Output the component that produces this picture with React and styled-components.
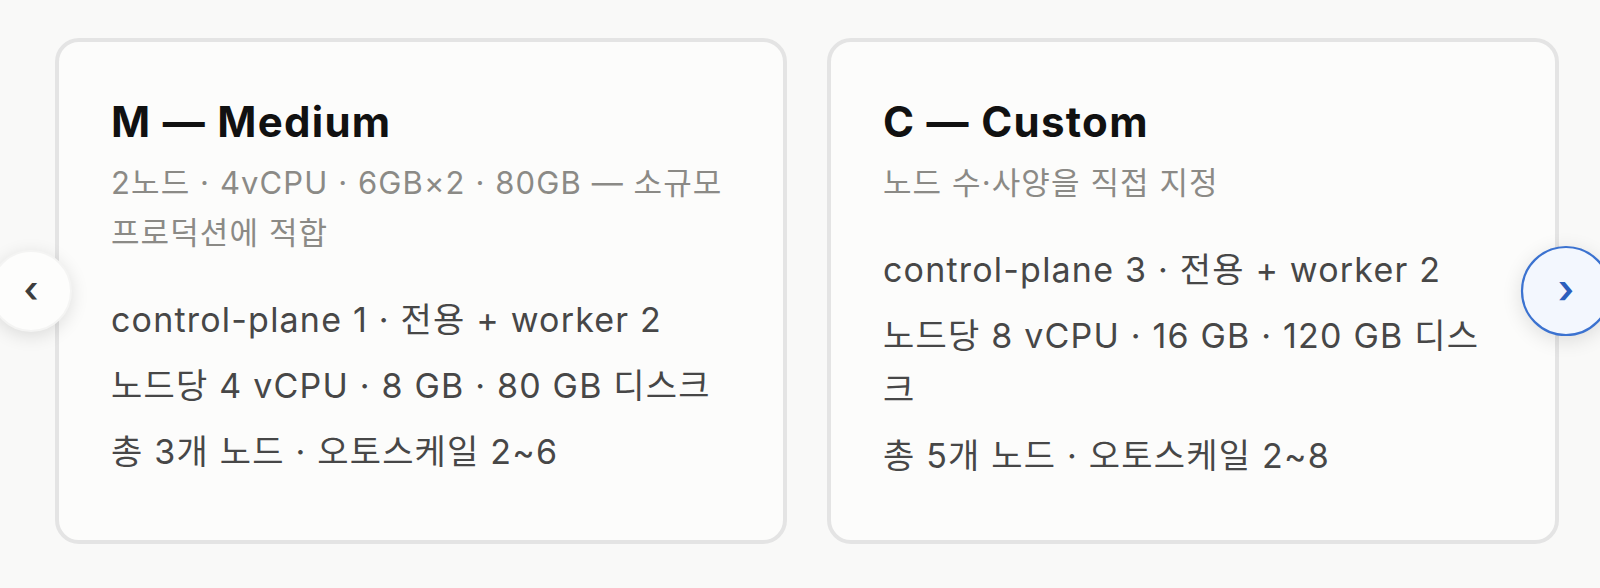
import React from "react";
import styled, { createGlobalStyle } from "styled-components";

const plans = [
  {
    id: "m",
    title: "M — Medium",
    summary: "2노드 · 4vCPU · 6GB×2 · 80GB — 소규모 프로덕션에 적합",
    specs: [
      "control-plane 1 · 전용 + worker 2",
      "노드당 4 vCPU · 8 GB · 80 GB 디스크",
      "총 3개 노드 · 오토스케일 2~6"
    ]
  },
  {
    id: "c",
    title: "C — Custom",
    summary: "노드 수·사양을 직접 지정",
    specs: [
      "control-plane 3 · 전용 + worker 2",
      "노드당 8 vCPU · 16 GB · 120 GB 디스크",
      "총 5개 노드 · 오토스케일 2~8"
    ]
  }
];

const PlanCarousel = () => {
  return (
    <Carousel>
      <Track>
        {plans.map(plan => (
          <Card key={plan.id}>
            <Title>{plan.title}</Title>
            <Summary>{plan.summary}</Summary>
            <SpecList>
              {plan.specs.map(spec => (
                <SpecItem key={spec}>{spec}</SpecItem>
              ))}
            </SpecList>
          </Card>
        ))}
      </Track>
      <NavButton $side="left" aria-label="이전">
        ‹
      </NavButton>
      <NavButton $side="right" $active aria-label="다음">
        ›
      </NavButton>
    </Carousel>
  );
};

export default function App() {
  return (
    <>
      <GlobalStyle />
      <Page>
        <PlanCarousel />
      </Page>
    </>
  );
}

const GlobalStyle = createGlobalStyle`
  html, body {
    margin: 0;
    background: #f9f9f8;
  }
  body {
    font-family: Inter, "Noto Sans CJK KR", sans-serif;
    -webkit-font-smoothing: antialiased;
  }
  * {
    box-sizing: border-box;
  }
`;

const Page = styled.div`
  width: 1600px;
  height: 588px;
  padding-top: 38px;
  overflow: hidden;
`;

const Carousel = styled.div`
  position: relative;
  overflow: hidden;
`;

const Track = styled.div`
  display: flex;
  gap: 40px;
  padding: 0 55px;
`;

const Card = styled.article`
  flex: 0 0 732px;
  border: 4px solid #e4e4e4;
  border-radius: 24px;
  padding: 56px 52px 57px;
  background: #fcfcfb;
`;

const Title = styled.h3`
  margin: 0;
  font-size: 42px;
  line-height: 48px;
  font-weight: 700;
  color: #111;
  letter-spacing: 1.3px;
`;

const Summary = styled.p`
  margin: 12px 0 0;
  font-size: 31px;
  line-height: 50px;
  letter-spacing: 1.1px;
  color: #8b8a86;
`;

const SpecList = styled.ul`
  list-style: none;
  margin: 35px 0 0;
  padding: 0;
  display: flex;
  flex-direction: column;
  gap: 12px;
`;

const SpecItem = styled.li`
  font-size: 34px;
  line-height: 54px;
  letter-spacing: 1.2px;
  color: #474747;
`;

const NavButton = styled.button`
  position: absolute;
  top: 50%;
  ${p => (p.$side === "left" ? "left: -10px;" : "right: -7px;")}
  width: 82px;
  height: 82px;
  border-radius: 50%;
  display: flex;
  align-items: center;
  justify-content: center;
  padding: 0 0 4px;
  font-family: Inter, sans-serif;
  font-size: 36px;
  font-weight: 600;
  line-height: 1;
  cursor: pointer;
  border: 2px solid ${p => (p.$active ? "#3b72d0" : "#f4f4f3")};
  background: ${p => (p.$active ? "#f3f7fe" : "#fdfdfc")};
  color: ${p => (p.$active ? "#2c5fbd" : "#3d3d3d")};
  box-shadow: 0 4px 18px rgba(0, 0, 0, 0.12);
  transform: translateY(-50%) ${p => (p.$active ? "scale(1.1)" : "")};
`;
